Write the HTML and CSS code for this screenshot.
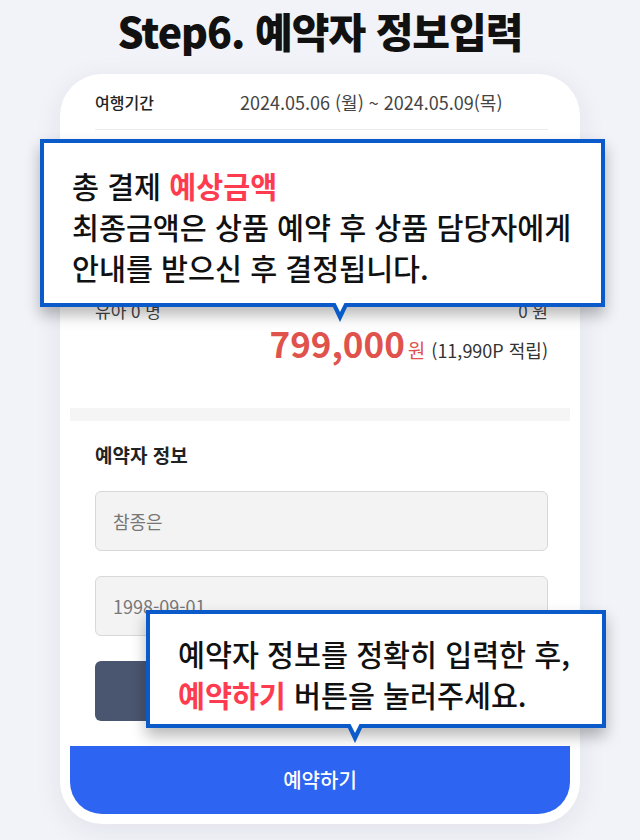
FILE: index.html
```html
<!DOCTYPE html>
<html lang="ko">
<head>
<meta charset="utf-8">
<title>Step6. 예약자 정보입력</title>
<link rel="stylesheet" href="styles.css">
</head>
<body>
  <h1 class="title">Step6. 예약자 정보입력</h1>
  <div class="card">
    <div class="summary">
      <div class="period">
        <span class="period-label">여행기간</span>
        <span class="period-value">2024.05.06 (월) ~ 2024.05.09(목)</span>
      </div>
      <div class="divider"></div>
      <div class="pax">
        <div class="pax-row"><span>유아 0 명</span><span>0 원</span></div>
      </div>
      <div class="total">
        <span class="total-num">799,000</span><span class="total-won">원</span><span class="total-point">(11,990P 적립)</span>
      </div>
    </div>
    <div class="sep"></div>
    <div class="booker">
      <h2 class="booker-title">예약자 정보</h2>
      <div class="field">참종은</div>
      <div class="field">1998-09-01</div>
      <div class="dark-btn"></div>
    </div>
    <button class="reserve">예약하기</button>
  </div>

  <div class="callout callout-price">
    <p>총 결제 <strong class="hl">예상금액</strong></p>
    <p>최종금액은 상품 예약 후 상품 담당자에게</p>
    <p>안내를 받으신 후 결정됩니다.</p>
  </div>
  <div class="callout callout-reserve">
    <p>예약자 정보를 정확히 입력한 후,</p>
    <p><strong class="hl">예약하기</strong> 버튼을 눌러주세요.</p>
  </div>
</body>
</html>
```

FILE: styles.css
```css
* { box-sizing: border-box; }

html, body {
  margin: 0;
  padding: 0;
}

body {
  width: 640px;
  height: 840px;
  background: #f2f3f8;
  font-family: "Noto Sans CJK KR", "Noto Sans", sans-serif;
  color: #222;
  position: relative;
  overflow: hidden;
}

.title {
  margin: 0;
  height: 74px;
  padding-top: 3px;
  text-align: center;
  font-size: 41px;
  line-height: 54px;
  font-weight: 900;
  letter-spacing: -1px;
  color: #111;
}

.card {
  margin-left: 60px;
  width: 520px;
  height: 750px;
  background: #fff;
  border-radius: 42px;
  padding: 0 10px 10px;
  box-shadow: 0 6px 28px rgba(30, 40, 90, 0.08);
  display: flex;
  flex-direction: column;
}

.summary {
  padding: 0 22px 0 25px;
}

.period {
  height: 55px;
  display: flex;
  align-items: center;
}

.period-label {
  width: 145px;
  font-size: 16px;
  font-weight: 500;
  color: #222;
}

.period-value {
  font-size: 18px;
  color: #444;
}

.divider {
  height: 1px;
  background: #ececec;
}

.pax {
  padding-top: 164px;
}

.pax-row {
  height: 32px;
  display: flex;
  justify-content: space-between;
  align-items: center;
  font-size: 17px;
  color: #444;
}

.total {
  height: 34px;
  line-height: 34px;
  margin-bottom: 48px;
  display: flex;
  justify-content: flex-end;
  align-items: baseline;
}

.total-num {
  font-size: 35px;
  font-weight: 700;
  color: #e0524c;
}

.total-won {
  font-size: 19px;
  color: #e0524c;
  margin-left: 3px;
  margin-right: 6px;
}

.total-point {
  font-size: 18px;
  color: #333;
}

.sep {
  height: 13px;
  background: #f5f5f5;
}

.booker {
  padding: 21px 22px 0 25px;
  display: flex;
  flex-direction: column;
  gap: 25px;
}

.booker-title {
  margin: 0 0 -2px;
  font-size: 19px;
  line-height: 26px;
  font-weight: 700;
  color: #222;
}

.field {
  height: 60px;
  border: 1px solid #d8d8d8;
  border-radius: 6px;
  background: #f3f3f3;
  padding-left: 17px;
  display: flex;
  align-items: center;
  font-size: 18px;
  color: #777;
}

.dark-btn {
  height: 60px;
  border-radius: 6px;
  background: #4a566f;
}

.reserve {
  margin-top: 25px;
  height: 69px;
  border: 0;
  border-radius: 0 0 32px 32px;
  background: #2d64f1;
  color: #fff;
  font-family: inherit;
  font-size: 20px;
  font-weight: 500;
  padding: 0;
}

/* callouts */
.callout {
  position: absolute;
  background: #fff;
  border: 4px solid #0b5ac9;
  box-shadow: 0 8px 14px rgba(0, 0, 0, 0.28);
  font-size: 29.3px;
  line-height: 41px;
  font-weight: 500;
  color: #111;
  padding-left: 28px;
}

.callout p {
  margin: 0;
  white-space: nowrap;
}

.hl {
  color: #ff3b4f;
  font-weight: 700;
}

.callout::before,
.callout::after {
  content: "";
  position: absolute;
  top: 100%;
  width: 0;
  height: 0;
  border-style: solid;
  border-color: transparent;
}

.callout::before {
  border-width: 19px 9px 0 9px;
  border-top-color: #0b5ac9;
}

.callout::after {
  border-width: 10px 5px 0 5px;
  border-top-color: #fff;
  margin-top: -1px;
}

.callout-price {
  left: 40px;
  top: 139px;
  width: 565px;
  height: 168px;
  padding-top: 22px;
}

.callout-price::before { left: 287px; }
.callout-price::after { left: 291px; }

.callout-reserve {
  left: 146px;
  top: 610px;
  width: 460px;
  height: 118px;
  padding-top: 19px;
}

.callout-reserve::before { left: 196px; }
.callout-reserve::after { left: 200px; }
```
